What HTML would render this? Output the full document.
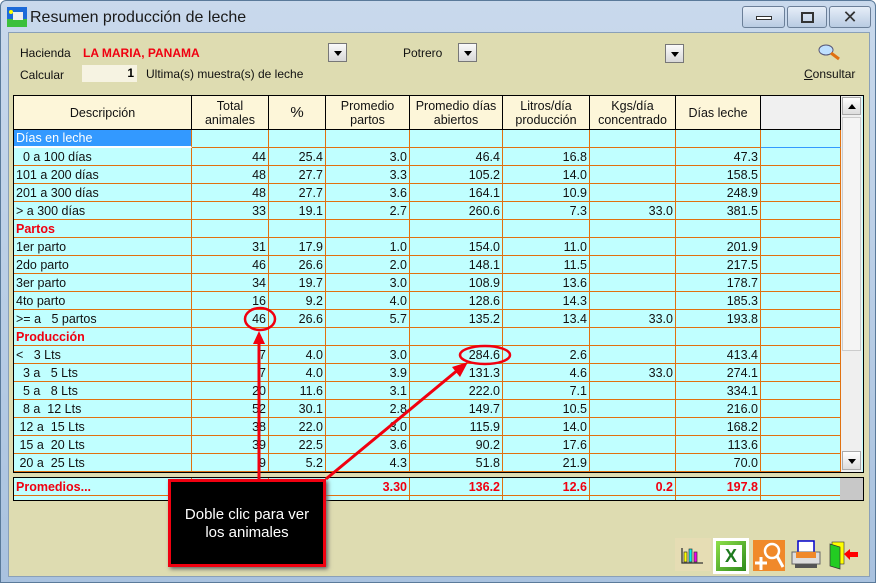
<!DOCTYPE html>
<html><head><meta charset="utf-8"><style>
*{margin:0;padding:0;box-sizing:border-box}
body{width:876px;height:583px;overflow:hidden;font-family:"Liberation Sans","DejaVu Sans",sans-serif;font-size:12px;background:#fff;position:relative}
.win{position:absolute;left:0;top:0;width:876px;height:583px;border:1px solid #5a7a9a;border-radius:6px 6px 0 0;background:linear-gradient(#c9d9ec,#a9c2df);}
.client{position:absolute;left:7px;top:31px;width:862px;height:545px;background:#dedcb1;border:1px solid #8aa0b8}
.title{position:absolute;left:29px;top:8px;font-size:16px;color:#1a1a1a}
.tb{position:absolute;top:5px;height:22px;border:1px solid #6b7f98;border-radius:3px;background:linear-gradient(#e6eef8,#b9cbe2)}
.lbl{position:absolute;font-size:12px;color:#111}
.dd{position:absolute;width:19px;height:19px;border:1px solid #777;background:linear-gradient(#fafafa,#d8d8d8)}
.dd:after{content:"";position:absolute;left:5px;top:7px;border-left:4px solid transparent;border-right:4px solid transparent;border-top:5px solid #000}
table{border-collapse:separate;border-spacing:0;table-layout:fixed;position:absolute}
td{border-right:1px solid #e07010;border-bottom:1px solid #e07010;height:18px;background:#c0ffff;padding:0 2px;white-space:pre;text-align:right;font-size:12.5px;color:#111;overflow:hidden}
td.l{text-align:left}
td.r{color:#f00010;font-weight:bold;text-align:left}
th{font-weight:normal;background:#fdf6d9;border-right:1px solid #000;border-bottom:1px solid #000;height:34px;font-size:12.5px;line-height:14px;color:#111}
</style></head><body>
<div class="win">
<svg style="position:absolute;left:6px;top:6px" width="20" height="20"><rect width="20" height="20" fill="#1c6ad8"/><rect y="12" width="20" height="8" fill="#3cc03c"/><rect x="6" y="5" width="10" height="8" fill="#eee"/><circle cx="4" cy="5" r="2" fill="#ff0"/></svg>
<div class="title">Resumen producción de leche</div>
<div class="tb" style="left:741px;width:43px"><div style="position:absolute;left:13px;top:9px;width:16px;height:4px;background:#fff;border:1px solid #333"></div></div>
<div class="tb" style="left:786px;width:40px"><div style="position:absolute;left:13px;top:5px;width:13px;height:11px;border:2px solid #333"></div></div>
<div class="tb" style="left:828px;width:42px;font-size:18px;text-align:center;line-height:20px;color:#333">✕</div>
<div class="client"></div>
<div class="lbl" style="left:19px;top:45px">Hacienda</div>
<div class="lbl" style="left:82px;top:45px;color:#f00010;font-weight:bold">LA MARIA, PANAMA</div>
<div class="dd" style="left:327px;top:42px"></div>
<div class="lbl" style="left:402px;top:45px">Potrero</div>
<div class="dd" style="left:457px;top:42px"></div>
<div class="dd" style="left:664px;top:43px"></div>
<svg style="position:absolute;left:816px;top:42px" width="26" height="18"><ellipse cx="9" cy="7" rx="7" ry="5" fill="#bfe0ff" stroke="#557" /><line x1="14" y1="10" x2="22" y2="16" stroke="#e07010" stroke-width="3"/></svg>
<div class="lbl" style="left:803px;top:66px"><u>C</u>onsultar</div>
<div class="lbl" style="left:19px;top:67px">Calcular</div>
<div style="position:absolute;left:81px;top:64px;width:55px;height:17px;background:#f6f3e2;font-weight:bold;text-align:right;padding-right:3px;line-height:17px">1</div>
<div class="lbl" style="left:145px;top:66px">Ultima(s) muestra(s) de leche</div>

<div style="position:absolute;left:12px;top:94px;width:851px;height:378px;border:1px solid #000;background:#c0ffff"></div>
<table style="left:13px;top:95px;width:827px">
<colgroup><col style="width:178px"><col style="width:77px"><col style="width:57px"><col style="width:84px"><col style="width:93px"><col style="width:87px"><col style="width:86px"><col style="width:85px"><col style="width:80px"></colgroup>
<tr><th>Descripción</th><th>Total<br>animales</th><th style="font-size:15px">%</th><th>Promedio<br>partos</th><th>Promedio días<br>abiertos</th><th>Litros/día<br>producción</th><th>Kgs/día<br>concentrado</th><th>Días leche</th><th style="background:#f0f0f0"></th></tr>
<tr><td class="l" style="background:#3399ff;color:#fff;border-bottom:2px solid #fff">Días en leche</td><td></td><td></td><td></td><td></td><td></td><td></td><td></td><td style="border-bottom-color:#3399ff"></td></tr>
<tr><td class="l">  0 a 100 días</td><td>44</td><td>25.4</td><td>3.0</td><td>46.4</td><td>16.8</td><td></td><td>47.3</td><td></td></tr>
<tr><td class="l">101 a 200 días</td><td>48</td><td>27.7</td><td>3.3</td><td>105.2</td><td>14.0</td><td></td><td>158.5</td><td></td></tr>
<tr><td class="l">201 a 300 días</td><td>48</td><td>27.7</td><td>3.6</td><td>164.1</td><td>10.9</td><td></td><td>248.9</td><td></td></tr>
<tr><td class="l">&gt; a 300 días</td><td>33</td><td>19.1</td><td>2.7</td><td>260.6</td><td>7.3</td><td>33.0</td><td>381.5</td><td></td></tr>
<tr><td class="r">Partos</td><td></td><td></td><td></td><td></td><td></td><td></td><td></td><td></td></tr>
<tr><td class="l">1er parto</td><td>31</td><td>17.9</td><td>1.0</td><td>154.0</td><td>11.0</td><td></td><td>201.9</td><td></td></tr>
<tr><td class="l">2do parto</td><td>46</td><td>26.6</td><td>2.0</td><td>148.1</td><td>11.5</td><td></td><td>217.5</td><td></td></tr>
<tr><td class="l">3er parto</td><td>34</td><td>19.7</td><td>3.0</td><td>108.9</td><td>13.6</td><td></td><td>178.7</td><td></td></tr>
<tr><td class="l">4to parto</td><td>16</td><td>9.2</td><td>4.0</td><td>128.6</td><td>14.3</td><td></td><td>185.3</td><td></td></tr>
<tr><td class="l">&gt;= a   5 partos</td><td>46</td><td>26.6</td><td>5.7</td><td>135.2</td><td>13.4</td><td>33.0</td><td>193.8</td><td></td></tr>
<tr><td class="r">Producción</td><td></td><td></td><td></td><td></td><td></td><td></td><td></td><td></td></tr>
<tr><td class="l">&lt;   3 Lts</td><td>7</td><td>4.0</td><td>3.0</td><td>284.6</td><td>2.6</td><td></td><td>413.4</td><td></td></tr>
<tr><td class="l">  3 a   5 Lts</td><td>7</td><td>4.0</td><td>3.9</td><td>131.3</td><td>4.6</td><td>33.0</td><td>274.1</td><td></td></tr>
<tr><td class="l">  5 a   8 Lts</td><td>20</td><td>11.6</td><td>3.1</td><td>222.0</td><td>7.1</td><td></td><td>334.1</td><td></td></tr>
<tr><td class="l">  8 a  12 Lts</td><td>52</td><td>30.1</td><td>2.8</td><td>149.7</td><td>10.5</td><td></td><td>216.0</td><td></td></tr>
<tr><td class="l"> 12 a  15 Lts</td><td>38</td><td>22.0</td><td>3.0</td><td>115.9</td><td>14.0</td><td></td><td>168.2</td><td></td></tr>
<tr><td class="l"> 15 a  20 Lts</td><td>39</td><td>22.5</td><td>3.6</td><td>90.2</td><td>17.6</td><td></td><td>113.6</td><td></td></tr>
<tr><td class="l"> 20 a  25 Lts</td><td>9</td><td>5.2</td><td>4.3</td><td>51.8</td><td>21.9</td><td></td><td>70.0</td><td></td></tr>
</table>
<div style="position:absolute;left:840px;top:95px;width:21px;height:376px;background:#efefef">
<div style="position:absolute;left:1px;top:1px;width:19px;height:18px;background:linear-gradient(#fff,#ddd);border:1px solid #aaa"><div style="position:absolute;left:5px;top:6px;border-left:4px solid transparent;border-right:4px solid transparent;border-bottom:5px solid #000"></div></div>
<div style="position:absolute;left:1px;top:21px;width:19px;height:234px;background:#f4f4f4;border:1px solid #ccc"></div>
<div style="position:absolute;left:1px;top:355px;width:19px;height:19px;background:linear-gradient(#fff,#ddd);border:1px solid #aaa"><div style="position:absolute;left:5px;top:7px;border-left:4px solid transparent;border-right:4px solid transparent;border-top:5px solid #000"></div></div>
</div>

<div style="position:absolute;left:12px;top:476px;width:851px;height:24px;border:1px solid #000;background:#c0ffff"></div>
<table style="left:13px;top:477px;width:827px">
<colgroup><col style="width:178px"><col style="width:77px"><col style="width:57px"><col style="width:84px"><col style="width:93px"><col style="width:87px"><col style="width:86px"><col style="width:85px"><col style="width:80px"></colgroup>
<tr style="font-weight:bold"><td class="r">Promedios...</td><td></td><td></td><td style="color:#f00010;font-weight:bold">3.30</td><td style="color:#f00010;font-weight:bold">136.2</td><td style="color:#f00010;font-weight:bold">12.6</td><td style="color:#f00010;font-weight:bold">0.2</td><td style="color:#f00010;font-weight:bold">197.8</td><td style="border-right:none"></td></tr>
<tr><td style="height:4px;border-bottom:none"></td><td style="height:4px;border-bottom:none"></td><td style="height:4px;border-bottom:none"></td><td style="height:4px;border-bottom:none"></td><td style="height:4px;border-bottom:none"></td><td style="height:4px;border-bottom:none"></td><td style="height:4px;border-bottom:none"></td><td style="height:4px;border-bottom:none"></td><td style="height:4px;border:none"></td></tr>
</table>
<div style="position:absolute;left:839px;top:477px;width:23px;height:22px;background:#c8c8c8"></div>

<svg style="position:absolute;left:0;top:0" width="876" height="583">
<ellipse cx="259" cy="318" rx="15" ry="11" fill="none" stroke="#f00010" stroke-width="2.5"/>
<ellipse cx="484" cy="354" rx="25" ry="9" fill="none" stroke="#f00010" stroke-width="2.5"/>
<line x1="258" y1="480" x2="258" y2="340" stroke="#f00010" stroke-width="3"/>
<polygon points="258,330 252,343 264,343" fill="#f00010"/>
<line x1="325" y1="478" x2="458" y2="368" stroke="#f00010" stroke-width="3"/>
<polygon points="467,361 451,366 459,376" fill="#f00010"/>
</svg>
<div style="position:absolute;left:167px;top:478px;width:158px;height:88px;background:#000;border:3px solid #f00010;color:#fff;font-size:15px;text-align:center;padding-top:24px;line-height:18px;box-shadow:2px 2px 4px #666">Doble clic para ver<br>los animales</div>

<div style="position:absolute;left:674px;top:537px;width:36px;height:33px;background:#e6ddb4"></div>
<svg style="position:absolute;left:680px;top:545px" width="24" height="20"><rect x="3" y="6" width="3" height="10" fill="#ff0" stroke="#333" stroke-width=".7"/><rect x="8" y="3" width="3" height="13" fill="#0ee" stroke="#333" stroke-width=".7"/><rect x="13" y="6" width="3" height="10" fill="#e0e" stroke="#333" stroke-width=".7"/><path d="M1 2V17H22" stroke="#333" fill="none" stroke-width="1.3"/></svg>
<div style="position:absolute;left:712px;top:537px;width:36px;height:36px;background:#fff;padding:3px"><div style="width:30px;height:30px;background:linear-gradient(135deg,#8ee04a,#2e8a1a);padding:4px"><div style="width:22px;height:22px;background:#fff;color:#1e7a1e;font-weight:bold;font-size:18px;text-align:center;line-height:22px">X</div></div></div>
<svg style="position:absolute;left:752px;top:539px" width="32" height="31"><rect width="32" height="31" fill="#f0892a"/><circle cx="19" cy="11" r="7" fill="none" stroke="#fff" stroke-width="2.5"/><line x1="24" y1="16" x2="30" y2="27" stroke="#fff" stroke-width="3"/><path d="M2 23H14M8 17V30" stroke="#fff" stroke-width="3"/></svg>
<svg style="position:absolute;left:789px;top:539px" width="32" height="30"><rect x="8" y="1" width="16" height="14" fill="#fff" stroke="#00c" stroke-width="1.5"/><rect x="2" y="12" width="28" height="12" fill="#ddd" stroke="#666"/><rect x="6" y="12" width="20" height="6" fill="#f0892a"/><rect x="5" y="24" width="22" height="4" fill="#555"/></svg>
<svg style="position:absolute;left:827px;top:539px" width="32" height="30"><rect x="4" y="2" width="12" height="22" fill="#ff0" stroke="#333" stroke-width=".6"/><polygon points="2,4 12,7 12,29 2,26" fill="#2c2" stroke="#333" stroke-width=".7"/><path d="M16 14 L22 9 V12 H30 V17 H22 V20Z" fill="#f00"/></svg>
</div>
</body></html>
